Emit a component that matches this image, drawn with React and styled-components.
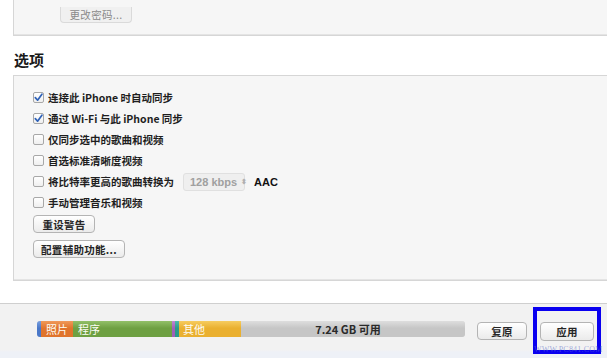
import React from "react";
import styled, { createGlobalStyle } from "styled-components";

const Global = createGlobalStyle`
  html, body { margin: 0; padding: 0; background: #ffffff; }
  body { font-family: "Noto Sans CJK SC", "Liberation Sans", sans-serif; overflow: hidden; }
  #root { width: 607px; height: 358px; }
`;

const Page = styled.div`
  width: 607px;
  height: 358px;
  display: flex;
  flex-direction: column;
  position: relative;
  overflow: hidden;
`;

const Panel = styled.div`
  margin-left: 13px;
  margin-right: -4px;
  background: #f6f6f6;
  border: 1px solid #d6d6d6;
  border-right: none;
  box-shadow: inset 0 -1px 0 #e4e4e4;
`;

const TopPanel = styled(Panel)`
  border-top: none;
  height: 36px;
  box-sizing: border-box;
  padding-left: 46px;
`;

const OptionsPanel = styled(Panel)`
  height: 206px;
  box-sizing: border-box;
  padding: 11px 0 0 19px;
  display: flex;
  flex-direction: column;
`;

const Button = styled.div`
  display: inline-flex;
  align-items: center;
  justify-content: center;
  box-sizing: border-box;
  height: ${(p) => p.$h || 18}px;
  width: ${(p) => p.$w}px;
  border: 1px solid #b4b4b4;
  border-radius: 4px;
  background: linear-gradient(#ffffff, #ebebeb);
  font-size: 10.5px;
  font-weight: 600;
  color: #262626;
  letter-spacing: 0.3px;
`;

const ChangeButton = styled(Button)`
  border-color: #dadada;
  border-top: none;
  border-radius: 0 0 4px 4px;
  background: #f0f0f0;
  color: #8a8a8a;
  font-weight: 400;
`;

const Heading = styled.div`
  margin: 15px 0 0 14px;
  height: 24px;
  font-size: 15px;
  font-weight: 700;
  color: #1a1a1a;
  line-height: 18px;
`;

const Row = styled.div`
  height: 21px;
  display: flex;
  align-items: center;
  gap: 3px;
  font-size: 10.5px;
  font-weight: 600;
  color: #1e1e1e;
  white-space: nowrap;
`;

const Box = styled.span`
  width: 11px;
  height: 11px;
  box-sizing: border-box;
  border: 1px solid #a8a8a8;
  border-radius: 2px;
  background: linear-gradient(#ffffff, #efefef);
  display: inline-flex;
  align-items: center;
  justify-content: center;
  margin-right: 1px;
`;

const Select = styled.span`
  margin-left: 6px;
  width: 62px;
  height: 18px;
  box-sizing: border-box;
  border: 1px solid #e0e0e0;
  border-radius: 3px;
  background: #efefef;
  color: #a0a0a0;
  display: inline-flex;
  align-items: center;
  padding-left: 6px;
  gap: 4px;
  font-family: "Liberation Sans", "Noto Sans CJK SC", sans-serif;
  font-size: 11px;
  font-weight: 700;
`;

const Arrows = styled.span`
  font-size: 7px;
  line-height: 1;
  color: #b0b0b0;
`;

const Aac = styled.span`
  margin-left: 6px;
  font-family: "Liberation Sans", sans-serif;
  font-size: 11px;
  font-weight: 700;
  color: #111;
`;

const ButtonRow = styled.div`
  margin-top: ${(p) => p.$mt}px;
  display: flex;
`;

const Spacer = styled.div`
  height: 22px;
`;

const BottomBar = styled.div`
  flex: 1;
  border-top: 1px solid #cfcfcf;
  background: linear-gradient(#f2f2f2 0px, #f2f2f2 46px, #eef1f7 48px);
  display: flex;
  align-items: flex-start;
  padding: 17px 0 0 37px;
  position: relative;
`;

const Storage = styled.div`
  width: 428px;
  height: 16px;
  border-radius: 3px;
  overflow: hidden;
  display: flex;
  box-shadow: inset 0 0 0 1px rgba(0,0,0,0.08);
`;

const Seg = styled.div`
  width: ${(p) => p.$w}px;
  flex: ${(p) => (p.$grow ? 1 : "none")};
  background: linear-gradient(${(p) => p.$light}, ${(p) => p.$c} 45%, ${(p) => p.$c});
  color: #fdfdf4;
  font-size: 11px;
  line-height: 16px;
  padding-left: ${(p) => p.$pl || 0}px;
  box-sizing: border-box;
  display: flex;
  justify-content: ${(p) => (p.$center ? "center" : "flex-start")};
  white-space: nowrap;
`;

const FreeText = styled.span`
  color: #2a2a2a;
  font-weight: 700;
  font-size: 11px;
  margin-right: 10px;
`;

const Actions = styled.div`
  display: flex;
  margin-left: 12px;
  margin-top: 1px;
  gap: 13px;
`;

const Highlight = styled.div`
  position: absolute;
  left: 533px;
  top: 3px;
  width: 68px;
  height: 47px;
  box-sizing: border-box;
  border: 4px solid #0a00f0;
  pointer-events: none;
`;

const Watermark = styled.div`
  position: absolute;
  left: 534px;
  top: 41px;
  font-family: "Liberation Serif", serif;
  font-size: 8px;
  color: rgba(90, 110, 200, 0.55);
  letter-spacing: 0.2px;
`;

function Check({ on }) {
  return (
    <Box>
      {on && (
        <svg width="9" height="9" viewBox="0 0 9 9">
          <path d="M1.3 4.6 L3.6 7.2 L7.9 1.2" fill="none" stroke="#2f62b8" strokeWidth="1.7" strokeLinecap="round" strokeLinejoin="round" />
        </svg>
      )}
    </Box>
  );
}

const options = [
  { t: "连接此 iPhone 时自动同步", on: true },
  { t: "通过 Wi-Fi 与此 iPhone 同步", on: true },
  { t: "仅同步选中的歌曲和视频" },
  { t: "首选标准清晰度视频" },
  { t: "将比特率更高的歌曲转换为", select: true },
  { t: "手动管理音乐和视频" },
];

export default function App() {
  return (
    <Page>
      <Global />
      <TopPanel>
        <ChangeButton $w={72} $h={16}>更改密码...</ChangeButton>
      </TopPanel>
      <Heading>选项</Heading>
      <OptionsPanel>
        {options.map((o) => (
          <Row key={o.t}>
            <Check on={o.on} />
            <span>{o.t}</span>
            {o.select && (
              <>
                <Select>
                  128 kbps <Arrows>⬍</Arrows>
                </Select>
                <Aac>AAC</Aac>
              </>
            )}
          </Row>
        ))}
        <ButtonRow $mt={2}>
          <Button $w={62}>重设警告</Button>
        </ButtonRow>
        <ButtonRow $mt={7}>
          <Button $w={92}>配置辅助功能...</Button>
        </ButtonRow>
      </OptionsPanel>
      <Spacer />
      <BottomBar>
        <Storage>
          <Seg $w={4} $c="#4a78c8" $light="#7aa0e0" />
          <Seg $w={32} $c="#e0742c" $light="#f09a5a" $pl={5}>照片</Seg>
          <Seg $w={99} $c="#6ea042" $light="#92c068" $pl={5}>程序</Seg>
          <Seg $w={3} $c="#a060b8" $light="#c088d4" />
          <Seg $w={4} $c="#2a9a8a" $light="#50bcac" />
          <Seg $w={62} $c="#eab030" $light="#f6cc60" $pl={4}>其他</Seg>
          <Seg $grow $center $c="#c6c6c6" $light="#dedede">
            <FreeText>7.24 GB 可用</FreeText>
          </Seg>
        </Storage>
        <Actions>
          <Button $w={50}>复原</Button>
          <Button $w={54} $h={19}>应用</Button>
        </Actions>
        <Highlight />
        <Watermark>WWW.PC841.COM</Watermark>
      </BottomBar>
    </Page>
  );
}
